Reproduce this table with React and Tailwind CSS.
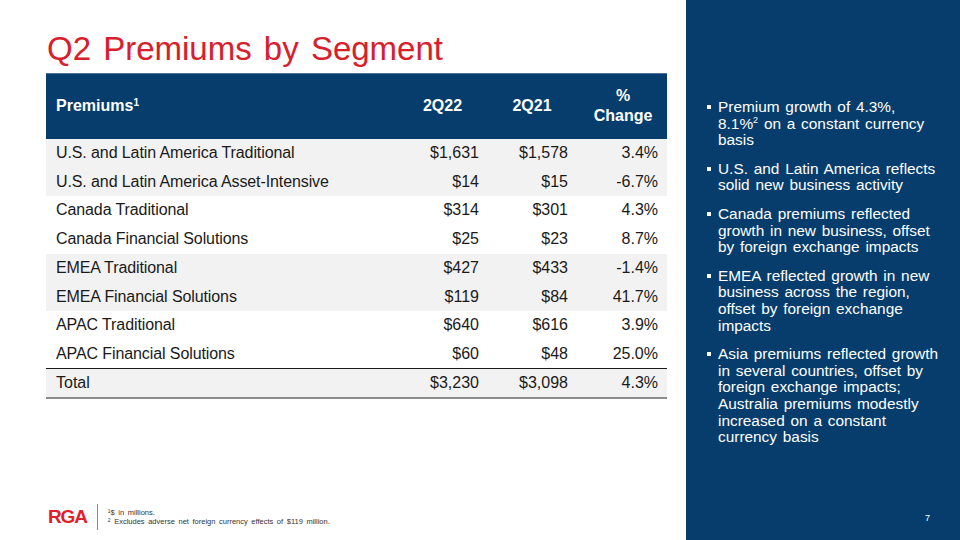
const rows = [
  { label: "U.S. and Latin America Traditional", a: "$1,631", b: "$1,578", c: "3.4%", shade: true },
  { label: "U.S. and Latin America Asset-Intensive", a: "$14", b: "$15", c: "-6.7%", shade: true },
  { label: "Canada Traditional", a: "$314", b: "$301", c: "4.3%" },
  { label: "Canada Financial Solutions", a: "$25", b: "$23", c: "8.7%" },
  { label: "EMEA Traditional", a: "$427", b: "$433", c: "-1.4%", shade: true },
  { label: "EMEA Financial Solutions", a: "$119", b: "$84", c: "41.7%", shade: true },
  { label: "APAC Traditional", a: "$640", b: "$616", c: "3.9%" },
  { label: "APAC Financial Solutions", a: "$60", b: "$48", c: "25.0%" },
]

const bullets = [
  <>Premium growth of 4.3%,<br />8.1%<sup className="text-[9px] leading-none -top-[0.6em]">2</sup> on a constant currency basis</>,
  <>U.S. and Latin America reflects solid new business activity</>,
  <>Canada premiums reflected growth in new business, offset by foreign exchange impacts</>,
  <>EMEA reflected growth in new business across the region, offset by foreign exchange impacts</>,
  <>Asia premiums reflected growth in several countries, offset by foreign exchange impacts; Australia premiums modestly increased on a constant currency basis</>,
]

export default function App() {
  return (
    <div
      className="w-[960px] h-[540px] flex bg-white overflow-hidden"
      style={{ fontFamily: '"Liberation Sans", Arial, sans-serif' }}
    >
      {/* left side */}
      <div className="w-[686px] flex flex-col">
        <h1 className="pl-[47px] pt-[29px] text-[33px] leading-[40px] text-[#d7202b] [word-spacing:3px]">
          Q2 Premiums by Segment
        </h1>
        <div className="pl-[46px] mt-[4px]">
          <table className="w-[621px] table-fixed border-collapse text-[16px] text-[#1a1a1a]">
            <colgroup>
              <col className="w-[354px]" />
              <col className="w-[85px]" />
              <col className="w-[90px]" />
              <col className="w-[92px]" />
            </colgroup>
            <thead>
              <tr className="h-[65px] bg-[#073d6c] text-white font-bold border-t border-[#4f7396]">
                <th className="text-left pl-[10px] font-bold">
                  Premiums<sup className="text-[10px] leading-none">1</sup>
                </th>
                <th className="text-center font-bold">2Q22</th>
                <th className="text-center font-bold pl-[4px]">2Q21</th>
                <th className="text-center font-bold leading-[20px] pl-[4px]">
                  %
                  <br />
                  Change
                </th>
              </tr>
            </thead>
            <tbody>
              {rows.map((r) => (
                <tr key={r.label} className={`h-[28.75px] ${r.shade ? "bg-[#f2f2f2]" : "bg-white"}`}>
                  <td className="pl-[10px] tracking-[-0.1px]">{r.label}</td>
                  <td className="text-right pr-[6px]">{r.a}</td>
                  <td className="text-right pr-[7px]">{r.b}</td>
                  <td className="text-right pr-[9px]">{r.c}</td>
                </tr>
              ))}
              <tr className="h-[29px] bg-[#f2f2f2] border-t border-[#1a1a1a] border-b-2 border-b-[#8c8c8c]">
                <td className="pl-[10px]">Total</td>
                <td className="text-right pr-[6px]">$3,230</td>
                <td className="text-right pr-[7px]">$3,098</td>
                <td className="text-right pr-[9px]">4.3%</td>
              </tr>
            </tbody>
          </table>
        </div>

        {/* footer */}
        <div className="mt-auto mb-[10px] flex items-center pl-[48px]">
          <span className="text-[19px] leading-[18px] font-bold text-[#e0202b] tracking-[-0.06em]">RGA</span>
          <div className="ml-[10px] w-px h-[26px] bg-[#8a8a8a]" />
          <div className="ml-[10px] text-[7.5px] leading-[9px] text-[#333] [word-spacing:1.5px]">
            <div>
              <sup className="text-[5px] leading-none">1</sup>$ in millions.
            </div>
            <div>
              <sup className="text-[5px] leading-none">2</sup> Excludes adverse net foreign currency effects of $119 million.
            </div>
          </div>
        </div>
      </div>

      {/* right panel */}
      <div className="w-[274px] bg-[#073d6c] text-white flex flex-col pl-[21px] pr-[20px]">
        <ul className="mt-[99px] flex flex-col gap-[12px]">
          {bullets.map((b, i) => (
            <li key={i} className="flex text-[15.4px] leading-[16.6px] [word-spacing:1.5px]">
              <span className="w-[4px] h-[4px] bg-white mt-[6px] mr-[7px] shrink-0" />
              <span>{b}</span>
            </li>
          ))}
        </ul>
        <div className="mt-auto mb-[15px] text-right pr-[10px] text-[9px]">7</div>
      </div>
    </div>
  )
}
